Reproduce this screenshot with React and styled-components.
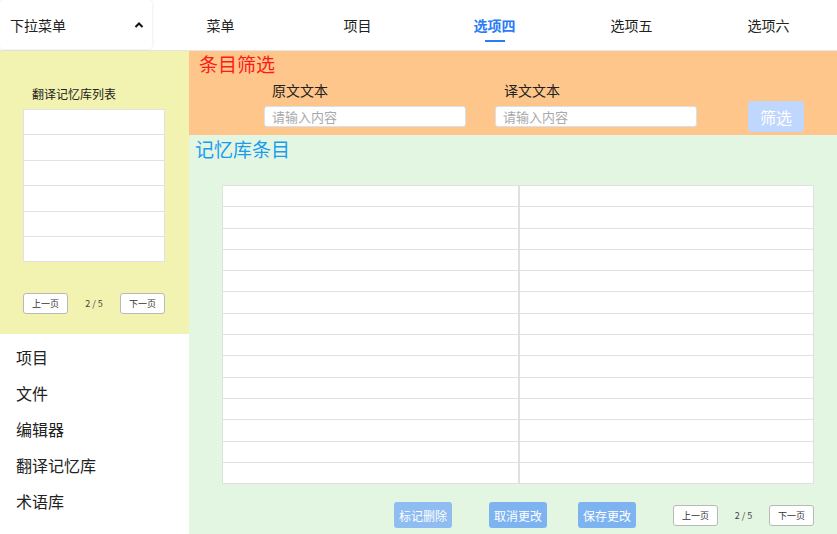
import React from 'react';
import styled, { createGlobalStyle } from 'styled-components';

const GlobalStyle = createGlobalStyle`
  html, body {
    margin: 0;
    padding: 0;
    background: #fff;
    font-family: "Noto Sans CJK SC", "Noto Sans", sans-serif;
    color: #222;
  }
  * { box-sizing: border-box; }
`;

const Page = styled.div`
  width: 837px;
  height: 534px;
  overflow: hidden;
  display: flex;
  flex-direction: column;
`;

// 顶部导航
const Header = styled.div`
  height: 51px;
  display: flex;
  border-bottom: 1px solid #e6e6e6;
  background: #fff;
`;

const Dropdown = styled.div`
  width: 152px;
  height: 49px;
  display: flex;
  align-items: center;
  justify-content: space-between;
  padding: 0 8px 0 10px;
  font-size: 14px;
  border-radius: 4px;
  box-shadow: 0 0 3px rgba(0, 0, 0, 0.12);
`;

const Tabs = styled.div`
  flex: 1;
  display: grid;
  grid-template-columns: repeat(5, 1fr);
`;

const Tab = styled.div`
  position: relative;
  display: flex;
  align-items: center;
  justify-content: center;
  font-size: 14px;
  font-weight: ${p => (p.active ? 700 : 400)};
  color: ${p => (p.active ? '#2a7cf6' : '#222')};
  padding-bottom: 1px;
  &::after {
    content: '';
    display: ${p => (p.active ? 'block' : 'none')};
    position: absolute;
    left: 50%;
    margin-left: -10px;
    top: 40px;
    width: 20px;
    height: 2px;
    background: #2a7cf6;
  }
`;

const Body = styled.div`
  flex: 1;
  display: flex;
`;

// 左侧栏
const Sidebar = styled.div`
  width: 189px;
  display: flex;
  flex-direction: column;
`;

const LibPanel = styled.div`
  height: 283px;
  background: #f2f3b0;
  padding: 34px 24px 0 23px;
`;

const LibTitle = styled.div`
  font-size: 12px;
  padding-left: 9px;
  height: 24px;
  line-height: 18px;
`;

const LibList = styled.div`
  width: 142px;
  border: 1px solid #e2e2e2;
  background: #e2e2e2;
  display: flex;
  flex-direction: column;
  gap: 1px;
`;

const LibRow = styled.div`
  height: 24.4px;
  background: #fff;
`;

const Pager = styled.div`
  display: flex;
  align-items: center;
  justify-content: space-between;
  width: ${p => p.width}px;
  margin-top: ${p => p.top || 0}px;
`;

const PageBtn = styled.div`
  width: 45px;
  height: 21px;
  border: 1px solid #b9b9b9;
  border-radius: 3px;
  background: #fff;
  font-size: 9px;
  color: #333;
  display: flex;
  align-items: center;
  justify-content: center;
`;

const PageNum = styled.div`
  font-size: 9px;
  color: #444;
`;

const Menu = styled.div`
  flex: 1;
  padding-top: 11px;
  background: #fff;
`;

const MenuItem = styled.div`
  height: 36px;
  line-height: 24px;
  padding-left: 16px;
  font-size: 16px;
  color: #222;
`;

// 主区域
const Main = styled.div`
  flex: 1;
  display: flex;
  flex-direction: column;
`;

const FilterPanel = styled.div`
  height: 84px;
  background: #fec68a;
`;

const FilterTitle = styled.div`
  color: #ff1a1a;
  font-size: 19px;
  height: 25px;
  line-height: 26px;
  padding-left: 10px;
`;

const FilterRow = styled.div`
  display: flex;
  align-items: flex-end;
  padding-left: 75px;
  margin-top: 4px;
`;

const Field = styled.div`
  width: 202px;
  margin-right: 29px;
  display: flex;
  flex-direction: column;
`;

const FieldLabel = styled.div`
  font-size: 14px;
  padding-left: ${p => p.indent}px;
  height: 26px;
  line-height: 20px;
`;

const Input = styled.input`
  width: 202px;
  height: 21px;
  border: 1px solid #dcdfe6;
  border-radius: 3px;
  padding: 0 7px;
  font-size: 13px;
  font-family: inherit;
  color: #333;
  background: #fff;
  outline: none;
  &::placeholder { color: #a9a9a9; }
`;

const FilterBtn = styled.div`
  margin-left: 22px;
  margin-bottom: -5px;
  width: 56px;
  height: 31px;
  border-radius: 4px;
  background: #bfd6fd;
  color: #fff;
  font-size: 16px;
  display: flex;
  align-items: center;
  justify-content: center;
`;

const EntryPanel = styled.div`
  flex: 1;
  background: #e3f6e1;
  display: flex;
  flex-direction: column;
`;

const EntryTitle = styled.div`
  color: #1a9cf0;
  font-size: 19px;
  line-height: 26px;
  padding: 1px 0 0 6px;
`;

const Table = styled.div`
  margin: 23px 0 0 33px;
  width: 592px;
  border: 1px solid #e0e0e0;
  background: #e0e0e0;
  display: grid;
  grid-template-columns: 295px 1fr;
  gap: 1px 2px;
`;

const Cell = styled.div`
  height: 20.3px;
  background: #fff;
`;

const Footer = styled.div`
  display: flex;
  align-items: center;
  margin: 18px 0 0 205px;
`;

const ActionBtn = styled.div`
  height: 26px;
  width: 58px;
  border-radius: 3px;
  background: ${p => p.bg};
  color: #fff;
  font-size: 12px;
  display: flex;
  align-items: center;
  justify-content: center;
  margin-right: ${p => p.gap}px;
`;

const Chevron = () => (
  <svg width="10" height="8" viewBox="0 0 10 8">
    <path d="M1.5 6 L5 2.5 L8.5 6" stroke="#111" strokeWidth="2" fill="none" />
  </svg>
);

const tabs = ['菜单', '项目', '选项四', '选项五', '选项六'];
const menus = ['项目', '文件', '编辑器', '翻译记忆库', '术语库'];

export default function App() {
  return (
    <Page>
      <GlobalStyle />
      <Header>
        <Dropdown>
          <span>下拉菜单</span>
          <Chevron />
        </Dropdown>
        <Tabs>
          {tabs.map(t => (
            <Tab key={t} active={t === '选项四'}>{t}</Tab>
          ))}
        </Tabs>
      </Header>
      <Body>
        <Sidebar>
          <LibPanel>
            <LibTitle>翻译记忆库列表</LibTitle>
            <LibList>
              {Array.from({ length: 6 }).map((_, i) => <LibRow key={i} />)}
            </LibList>
            <Pager width={142} top={31}>
              <PageBtn>上一页</PageBtn>
              <PageNum>2 / 5</PageNum>
              <PageBtn>下一页</PageBtn>
            </Pager>
          </LibPanel>
          <Menu>
            {menus.map(m => <MenuItem key={m}>{m}</MenuItem>)}
          </Menu>
        </Sidebar>
        <Main>
          <FilterPanel>
            <FilterTitle>条目筛选</FilterTitle>
            <FilterRow>
              <Field>
                <FieldLabel indent={8}>原文文本</FieldLabel>
                <Input placeholder="请输入内容" />
              </Field>
              <Field>
                <FieldLabel indent={9}>译文文本</FieldLabel>
                <Input placeholder="请输入内容" />
              </Field>
              <FilterBtn>筛选</FilterBtn>
            </FilterRow>
          </FilterPanel>
          <EntryPanel>
            <EntryTitle>记忆库条目</EntryTitle>
            <Table>
              {Array.from({ length: 28 }).map((_, i) => <Cell key={i} />)}
            </Table>
            <Footer>
              <ActionBtn bg="#8fbdf1" gap={37}>标记删除</ActionBtn>
              <ActionBtn bg="#7eb3f1" gap={31}>取消更改</ActionBtn>
              <ActionBtn bg="#7eb3f1" gap={37}>保存更改</ActionBtn>
              <Pager width={141}>
                <PageBtn>上一页</PageBtn>
                <PageNum>2 / 5</PageNum>
                <PageBtn>下一页</PageBtn>
              </Pager>
            </Footer>
          </EntryPanel>
        </Main>
      </Body>
    </Page>
  );
}
